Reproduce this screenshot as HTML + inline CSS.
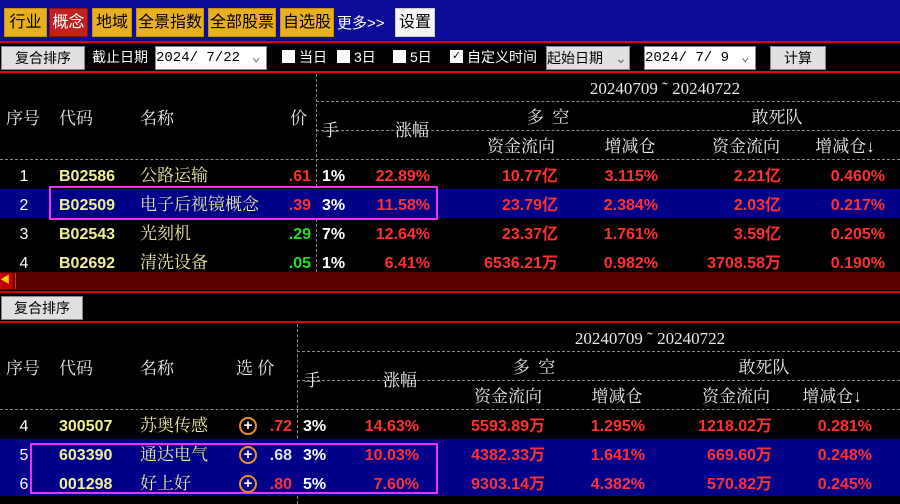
<!DOCTYPE html><html><head><meta charset="utf-8"><style>
body{margin:0;width:900px;height:504px;background:#000;overflow:hidden;position:relative;font-family:"Liberation Serif","Noto Serif CJK SC",serif;}
div,span{position:absolute;white-space:nowrap;line-height:20px}
.b{top:8px;height:27px;background:#e8b020;border:1px solid #c89010;font:16px "Liberation Sans","Noto Sans CJK SC",sans-serif;color:#000;line-height:27px;text-align:center}
.t{font:14px "Liberation Sans","Noto Sans CJK SC",sans-serif;color:#fff}
.btn{background:#e0e0e0;border:1px solid #888;color:#000;font:14px "Liberation Sans","Noto Sans CJK SC",sans-serif;text-align:center;line-height:22px;height:22px}
.sel{background:#fff;color:#000;font:14px "Liberation Mono","Noto Sans CJK SC",monospace;height:22px;line-height:22px;border:1px solid #888}
.cb{width:13px;height:13px;background:#fff;top:50px}
.rl{left:0;width:900px;height:2px;background:#e00000}
.h{color:#e8e8e8;font-size:17px}
.dh{border-top:1px dashed #888;height:0}
.dv{border-left:1px dashed #888;width:0}
.r{font:bold 16px "Liberation Sans","Noto Sans CJK SC",sans-serif;color:#ff3030;transform:translateX(-100%);margin-top:3px}
.u{margin-top:-3px}
.w{font:16px "Liberation Sans",sans-serif;color:#fff;margin-top:3px}
.y{font:bold 16px "Liberation Sans",sans-serif;color:#f0f090;margin-top:3px}
.n{font-size:17px;color:#e8e8a0;margin-top:1px}
.c{transform:translateX(-50%)}
.pl{border:2px solid #e89020;border-radius:50%;color:#fff;font:bold 15px/14px "Liberation Sans";text-align:center;box-sizing:border-box;width:18px;height:18px}
</style></head><body>
<div style="left:0;top:0;width:900px;height:41px;background:#0c0c98"></div>
<div class="b" style="left:4px;width:41px">行业</div>
<div class="b" style="left:49px;width:37px;background:#c02020;color:#fff;border-color:#901010">概念</div>
<div class="b" style="left:92px;width:38px">地域</div>
<div class="b" style="left:136px;width:66px">全景指数</div>
<div class="b" style="left:208px;width:66px">全部股票</div>
<div class="b" style="left:280px;width:52px">自选股</div>
<div class="t" style="left:337px;top:12px;font-size:15px">更多&gt;&gt;</div>
<div class="b" style="left:395px;width:38px;background:#f4f4f4;border-color:#ccc">设置</div>
<div class="rl" style="top:41px"></div>
<div class="btn" style="left:1px;top:46px;width:82px">复合排序</div>
<div class="t" style="left:92px;top:47px">截止日期</div>
<div class="sel" style="left:155px;top:46px;width:110px">2024/ 7/22 <span style="left:96px;color:#666;line-height:22px">⌄</span></div>
<div class="cb" style="left:282px"></div><div class="t" style="left:299px;top:47px">当日</div>
<div class="cb" style="left:337px"></div><div class="t" style="left:354px;top:47px">3日</div>
<div class="cb" style="left:393px"></div><div class="t" style="left:410px;top:47px">5日</div>
<div class="cb" style="left:450px;font:11px/13px sans-serif;color:#000;text-align:center">✓</div><div class="t" style="left:467px;top:47px">自定义时间</div>
<div class="sel" style="left:546px;top:46px;width:82px;background:#e0e0e0;font-family:'Liberation Sans','Noto Sans CJK SC'">起始日期 <span style="left:68px;color:#666;line-height:22px">⌄</span></div>
<div class="sel" style="left:644px;top:46px;width:110px">2024/ 7/ 9 <span style="left:96px;color:#666;line-height:22px">⌄</span></div>
<div class="btn" style="left:770px;top:46px;width:54px">计算</div>
<div class="rl" style="top:71px"></div>

<div class="dv" style="left:316px;top:74px;height:198px"></div>
<div class="dh" style="left:316px;top:101px;width:584px"></div>
<div class="dh" style="left:316px;top:130px;width:584px"></div>
<div class="dh" style="left:0;top:159px;width:900px"></div>
<div class="h c" style="left:665px;top:79px">20240709 ˜ 20240722</div>
<div class="h c" style="left:548px;top:108px">多 &nbsp;空</div>
<div class="h c" style="left:777px;top:108px">敢死队</div>
<div class="h c" style="left:521px;top:137px">资金流向</div><div class="h c" style="left:630px;top:137px">增减仓</div>
<div class="h c" style="left:746px;top:137px">资金流向</div><div class="h c" style="left:845px;top:137px">增减仓↓</div>
<div class="h" style="left:6px;top:109px">序号</div><div class="h" style="left:59px;top:109px">代码</div><div class="h" style="left:140px;top:109px">名称</div>
<div class="h" style="left:290px;top:109px">价</div><div class="h" style="left:322px;top:121px">手</div><div class="h" style="left:395px;top:121px">涨幅</div>

<div style="left:0;top:189px;width:900px;height:29px;background:#000088"></div>
<div style="left:49px;top:186px;width:385px;height:30px;border:2px solid #f030f0"></div>

<div style="left:0;top:272px;width:900px;height:18px;background:#5c0000"></div>
<div style="left:0;top:273px;width:13px;height:16px;background:#c00000;color:#ffd000;font-size:10px;line-height:16px">◀</div>
<div style="left:15px;top:273px;width:1px;height:16px;background:#c04000"></div>
<div class="rl" style="top:291px"></div>
<div class="btn" style="left:1px;top:296px;width:80px">复合排序</div>
<div class="rl" style="top:321px"></div>

<div class="dv" style="left:297px;top:324px;height:180px"></div>
<div class="dh" style="left:297px;top:351px;width:603px"></div>
<div class="dh" style="left:297px;top:380px;width:603px"></div>
<div class="dh" style="left:0;top:409px;width:900px"></div>
<div class="h c" style="left:650px;top:329px">20240709 ˜ 20240722</div>
<div class="h c" style="left:534px;top:358px">多 &nbsp;空</div>
<div class="h c" style="left:764px;top:358px">敢死队</div>
<div class="h c" style="left:508px;top:387px">资金流向</div><div class="h c" style="left:617px;top:387px">增减仓</div>
<div class="h c" style="left:736px;top:387px">资金流向</div><div class="h c" style="left:832px;top:387px">增减仓↓</div>
<div class="h" style="left:6px;top:359px">序号</div><div class="h" style="left:59px;top:359px">代码</div><div class="h" style="left:140px;top:359px">名称</div>
<div class="h" style="left:236px;top:359px">选 价</div><div class="h" style="left:304px;top:371px">手</div><div class="h" style="left:383px;top:371px">涨幅</div>
<div style="left:0;top:439px;width:900px;height:57px;background:#000088"></div>
<div style="left:30px;top:443px;width:404px;height:47px;border:2px solid #f030f0"></div>

<div class="w c" style="left:24px;top:165px">1</div><div class="y" style="left:59px;top:165px">B02586</div><div class="n" style="left:140px;top:165px">公路运输</div><div class="r" style="left:311px;top:165px">.61</div><div class="w" style="left:322px;top:165px;font-weight:bold">1%</div><div class="r" style="left:430px;top:165px">22.89%</div><div class="r u" style="left:558px;top:165px">10.77亿</div><div class="r" style="left:658px;top:165px">3.115%</div><div class="r u" style="left:781px;top:165px">2.21亿</div><div class="r" style="left:885px;top:165px">0.460%</div>
<div class="w c" style="left:24px;top:194px">2</div><div class="y" style="left:59px;top:194px">B02509</div><div class="n" style="left:140px;top:194px">电子后视镜概念</div><div class="r" style="left:311px;top:194px">.39</div><div class="w" style="left:322px;top:194px;font-weight:bold">3%</div><div class="r" style="left:430px;top:194px">11.58%</div><div class="r u" style="left:558px;top:194px">23.79亿</div><div class="r" style="left:658px;top:194px">2.384%</div><div class="r u" style="left:781px;top:194px">2.03亿</div><div class="r" style="left:885px;top:194px">0.217%</div>
<div class="w c" style="left:24px;top:223px">3</div><div class="y" style="left:59px;top:223px">B02543</div><div class="n" style="left:140px;top:223px">光刻机</div><div class="r" style="left:311px;top:223px;color:#20e020">.29</div><div class="w" style="left:322px;top:223px;font-weight:bold">7%</div><div class="r" style="left:430px;top:223px">12.64%</div><div class="r u" style="left:558px;top:223px">23.37亿</div><div class="r" style="left:658px;top:223px">1.761%</div><div class="r u" style="left:781px;top:223px">3.59亿</div><div class="r" style="left:885px;top:223px">0.205%</div>
<div class="w c" style="left:24px;top:252px">4</div><div class="y" style="left:59px;top:252px">B02692</div><div class="n" style="left:140px;top:252px">清洗设备</div><div class="r" style="left:311px;top:252px;color:#20e020">.05</div><div class="w" style="left:322px;top:252px;font-weight:bold">1%</div><div class="r" style="left:430px;top:252px">6.41%</div><div class="r u" style="left:558px;top:252px">6536.21万</div><div class="r" style="left:658px;top:252px">0.982%</div><div class="r u" style="left:781px;top:252px">3708.58万</div><div class="r" style="left:885px;top:252px">0.190%</div>

<div class="w c" style="left:24px;top:415px">4</div><div class="y" style="left:59px;top:415px">300507</div><div class="n" style="left:140px;top:415px">苏奥传感</div><div class="pl" style="left:239px;top:417px">+</div><div class="r" style="left:292px;top:415px">.72</div><div class="w" style="left:303px;top:415px;font-weight:bold">3%</div><div class="r" style="left:419px;top:415px">14.63%</div><div class="r u" style="left:545px;top:415px">5593.89万</div><div class="r" style="left:645px;top:415px">1.295%</div><div class="r u" style="left:772px;top:415px">1218.02万</div><div class="r" style="left:872px;top:415px">0.281%</div>
<div class="w c" style="left:24px;top:444px">5</div><div class="y" style="left:59px;top:444px">603390</div><div class="n" style="left:140px;top:444px">通达电气</div><div class="pl" style="left:239px;top:446px">+</div><div class="r" style="left:292px;top:444px;color:#e0e0e0">.68</div><div class="w" style="left:303px;top:444px;font-weight:bold">3%</div><div class="r" style="left:419px;top:444px">10.03%</div><div class="r u" style="left:545px;top:444px">4382.33万</div><div class="r" style="left:645px;top:444px">1.641%</div><div class="r u" style="left:772px;top:444px">669.60万</div><div class="r" style="left:872px;top:444px">0.248%</div>
<div class="w c" style="left:24px;top:473px">6</div><div class="y" style="left:59px;top:473px">001298</div><div class="n" style="left:140px;top:473px">好上好</div><div class="pl" style="left:239px;top:475px">+</div><div class="r" style="left:292px;top:473px">.80</div><div class="w" style="left:303px;top:473px;font-weight:bold">5%</div><div class="r" style="left:419px;top:473px">7.60%</div><div class="r u" style="left:545px;top:473px">9303.14万</div><div class="r" style="left:645px;top:473px">4.382%</div><div class="r u" style="left:772px;top:473px">570.82万</div><div class="r" style="left:872px;top:473px">0.245%</div>
</body></html>
